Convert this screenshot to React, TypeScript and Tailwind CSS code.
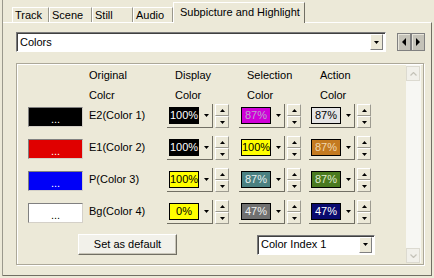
import React from "react";

type Cell = { bg: string; fg: string; text: string };
type Row = { swatch: string; dots: string; label: string; cells: Cell[] };

const rows: Row[] = [
  {
    swatch: "bg-[#000000]",
    dots: "text-white",
    label: "E2(Color 1)",
    cells: [
      { bg: "bg-[#000000]", fg: "text-white", text: "100%" },
      { bg: "bg-[#d000d8]", fg: "text-[#b8a8c8]", text: "87%" },
      { bg: "bg-[#e4e4e4]", fg: "text-black", text: "87%" },
    ],
  },
  {
    swatch: "bg-[#e00000]",
    dots: "text-white",
    label: "E1(Color 2)",
    cells: [
      { bg: "bg-[#000000]", fg: "text-white", text: "100%" },
      { bg: "bg-[#ffff00]", fg: "text-black", text: "100%" },
      { bg: "bg-[#c47a20]", fg: "text-[#f0d8b0]", text: "87%" },
    ],
  },
  {
    swatch: "bg-[#0000f8]",
    dots: "text-white",
    label: "P(Color 3)",
    cells: [
      { bg: "bg-[#ffff00]", fg: "text-black", text: "100%" },
      { bg: "bg-[#4a8080]", fg: "text-[#e8f0f0]", text: "87%" },
      { bg: "bg-[#4a7a20]", fg: "text-[#e0ecd0]", text: "87%" },
    ],
  },
  {
    swatch: "bg-white",
    dots: "text-black",
    label: "Bg(Color 4)",
    cells: [
      { bg: "bg-[#ffff00]", fg: "text-black", text: "0%" },
      { bg: "bg-[#707070]", fg: "text-[#f0f0f0]", text: "47%" },
      { bg: "bg-[#0a0a6e]", fg: "text-white", text: "47%" },
    ],
  },
];

const tabs = [
  { label: "Track", w: "w-[37px]" },
  { label: "Scene", w: "w-[43px]" },
  { label: "Still", w: "w-[41px]" },
  { label: "Audio", w: "w-[40px]" },
];

function Tri({ dir, color = "#000" }: { dir: "up" | "down" | "left" | "right"; color?: string }) {
  const pts = {
    up: "0,3 2.5,0 5,3",
    down: "0,0 5,0 2.5,3",
    left: "4,0 4,8 0,4",
    right: "0,0 0,8 4,4",
  }[dir];
  const w = dir === "left" || dir === "right" ? 4 : 5;
  const h = dir === "left" || dir === "right" ? 8 : 3;
  return (
    <svg width={w} height={h} viewBox={`0 0 ${w} ${h}`}>
      <polygon points={pts} fill={color} />
    </svg>
  );
}

function DropButton() {
  return (
    <div className="flex h-[16px] w-[13px] items-center justify-center border border-t-white border-l-white border-b-[#808080] border-r-[#808080] bg-[#ece9d8]">
      <Tri dir="down" />
    </div>
  );
}

function Spinner() {
  return (
    <div className="ml-[2px] flex h-[24px] w-[14px] flex-col">
      <div className="flex h-[12px] items-center justify-center border border-t-white border-l-white border-b-[#9d9b90] border-r-[#9d9b90] bg-[#ece9d8]">
        <Tri dir="up" />
      </div>
      <div className="flex h-[12px] items-center justify-center border border-t-white border-l-white border-b-[#9d9b90] border-r-[#9d9b90] bg-[#ece9d8]">
        <Tri dir="down" />
      </div>
    </div>
  );
}

function ColorCombo({ cell }: { cell: Cell }) {
  return (
    <div className="flex items-start">
      <div className="flex h-[24px] items-center border-b border-r border-b-[#716f64] border-r-[#716f64] pl-[2px]">
        <div
          className={`flex h-[17px] w-[30px] items-center justify-center border border-black leading-none ${cell.bg} ${cell.fg}`}
        >
          {cell.text}
        </div>
        <div className="ml-[1px] flex h-[17px] w-[12px] items-center justify-center">
          <Tri dir="down" />
        </div>
      </div>
      <Spinner />
    </div>
  );
}

export default function App() {
  return (
    <div className="h-[278px] w-[434px] overflow-hidden bg-[#ece9d8] pl-[2px] font-['Liberation_Sans',Arial,sans-serif] text-[11px] text-black">
      <div className="flex h-[276px] w-[430px] flex-col border-l border-l-[#9a988c]">
        {/* tab strip */}
        <div className="flex h-[22px] items-end pl-[9px]">
          {tabs.map((t) => (
            <div
              key={t.label}
              className={`flex h-[15px] items-center border-t border-l border-r border-t-white border-l-white border-r-[#9a988c] pl-[2px] leading-none ${t.w}`}
            >
              {t.label}
            </div>
          ))}
          <div className="relative z-10 -mb-[1px] flex h-[21px] w-[132px] items-start border-t border-l border-r border-t-white border-l-white border-r-[#716f64] bg-[#ece9d8] pl-[6px] pt-[4px] leading-none">
            Subpicture and Highlight
          </div>
        </div>

        {/* panel */}
        <div className="flex h-[254px] flex-col border-t border-r border-b border-t-white border-r-[#716f64] border-b-[#716f64] pl-[13px]">
          <div className="mt-[9px] flex items-center">
            <div className="flex h-[20px] w-[370px] items-center justify-between border border-t-[#7a7a7a] border-l-[#7a7a7a] border-b-white border-r-white bg-white pl-[3px] pr-[2px] shadow-[inset_1px_1px_0_#404040]">
              <span className="leading-none">Colors</span>
              <DropButton />
            </div>
            <div className="ml-[11px] flex">
              <div className="flex h-[18px] w-[14px] items-center justify-center border border-[#808080] bg-[#c4c2b8] shadow-[inset_1px_1px_0_#e8e6dc]">
                <Tri dir="left" />
              </div>
              <div className="flex h-[18px] w-[14px] items-center justify-center border border-[#808080] bg-[#c4c2b8] shadow-[inset_1px_1px_0_#e8e6dc]">
                <Tri dir="right" />
              </div>
            </div>
          </div>

          {/* group box */}
          <div className="mt-[11px] flex h-[202px] w-[408px] border border-[#aca899] shadow-[inset_1px_1px_0_#fff,1px_1px_0_#fff]">
            <div className="flex flex-1 flex-col pl-[11px]">
              <div className="grid grid-cols-[55px_84px_72px_70px_1fr] pt-[5px] leading-[13px]">
                <div />
                <div className="pl-[6px]">Original</div>
                <div className="pl-[8px]">Display</div>
                <div className="pl-[8px]">Selection</div>
                <div className="pl-[11px]">Action</div>
                <div className="h-[7px]" />
                <div className="h-[7px]" />
                <div className="h-[7px]" />
                <div className="h-[7px]" />
                <div className="h-[7px]" />
                <div />
                <div className="pl-[6px]">Colcr</div>
                <div className="pl-[8px]">Color</div>
                <div className="pl-[8px]">Color</div>
                <div className="pl-[11px]">Color</div>
              </div>

              <div className="mt-[2px] flex flex-col">
                {rows.map((r) => (
                  <div
                    key={r.label}
                    className="grid h-[32px] grid-cols-[55px_84px_72px_70px_1fr] items-start"
                  >
                    <div
                      className={`mt-[3px] flex h-[20px] w-[55px] items-center justify-center border border-t-[#808080] border-l-[#808080] border-b-[#d4d0c8] border-r-[#d4d0c8] pt-[4px] leading-none ${r.swatch} ${r.dots}`}
                    >
                      ...
                    </div>
                    <div className="mt-[5px] pl-[6px] leading-[13px]">{r.label}</div>
                    {r.cells.map((c, i) => (
                      <ColorCombo key={i} cell={c} />
                    ))}
                  </div>
                ))}
              </div>

              <div className="mt-[2px] flex h-[21px] items-center">
                <div className="ml-[50px] flex h-[21px] w-[99px] items-center justify-center border border-t-white border-l-white border-b-[#716f64] border-r-[#716f64] bg-[#f2f1ea] leading-none shadow-[inset_-1px_-1px_0_#c8c5b8]">
                  Set as default
                </div>
                <div className="ml-[80px] flex h-[20px] w-[118px] items-center justify-between border border-t-[#7a7a7a] border-l-[#7a7a7a] border-b-white border-r-white bg-white pl-[3px] pr-[2px] shadow-[inset_1px_1px_0_#404040]">
                  <span className="leading-none">Color Index 1</span>
                  <DropButton />
                </div>
              </div>
            </div>

            {/* disabled scrollbar */}
            <div className="my-[1px] mr-[2px] flex w-[15px] flex-col justify-between bg-[#f7f7f3]">
              <div className="mt-[1px] flex h-[15px] w-[14px] items-center justify-center border border-[#dcdad0] bg-[#f1f0ea]">
                <svg width="7" height="4" viewBox="0 0 7 4">
                  <polyline points="0.5,3.5 3.5,0.5 6.5,3.5" fill="none" stroke="#c4c2b8" strokeWidth="1.2" />
                </svg>
              </div>
              <div className="flex h-[15px] w-[14px] items-center justify-center border border-[#dcdad0] bg-[#f1f0ea]">
                <svg width="7" height="4" viewBox="0 0 7 4">
                  <polyline points="0.5,0.5 3.5,3.5 6.5,0.5" fill="none" stroke="#c4c2b8" strokeWidth="1.2" />
                </svg>
              </div>
            </div>
          </div>
        </div>
      </div>
    </div>
  );
}
